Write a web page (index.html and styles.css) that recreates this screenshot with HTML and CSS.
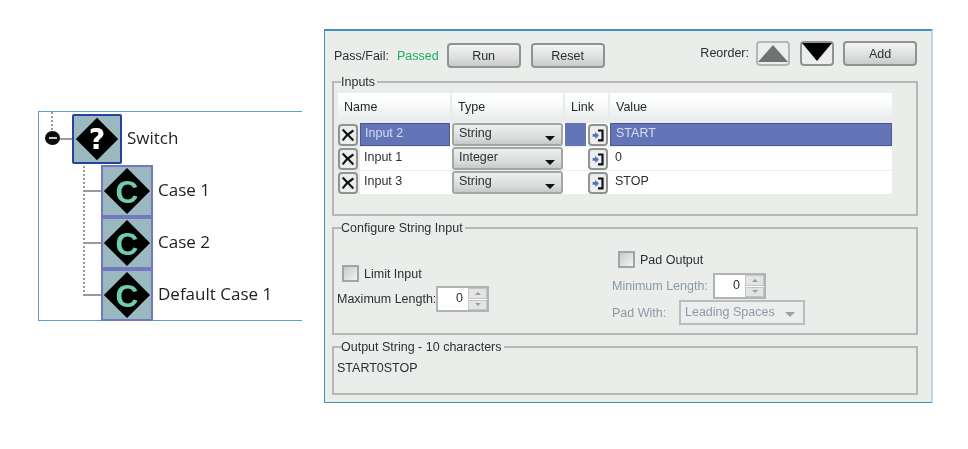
FILE: index.html
```html
<!DOCTYPE html>
<html lang="en">
<head>
<meta charset="utf-8">
<title>String Concatenation Block</title>
<link rel="stylesheet" href="styles.css">
</head>
<body>
<svg class="defs" width="0" height="0" aria-hidden="true">
  <defs>
    <symbol id="ico-x" viewBox="0 0 20 22"><path d="M4 5 L16 17 M4 17 L9 11 L16 6" fill="none" stroke="#111" stroke-width="2.4"/></symbol>
    <symbol id="ico-link" viewBox="0 0 20 22"><path d="M10 6 H15 V17 H10" fill="none" stroke="#111" stroke-width="2.4"/><path d="M4 10 H7 V7.5 L11 11.5 L7 15.5 V13 H4 Z" fill="#5570b8"/></symbol>
  </defs>
</svg>
<section class="tree">
  <span class="dots dots-top"></span>
  <span class="dots dots-main"></span>
  <div class="node node-switch">
    <span class="expander"><span class="minus"></span></span>
    <span class="stub stub-root"></span>
    <svg class="icon icon-switch" viewBox="0 0 50 50"><rect width="50" height="50" fill="#9ab8bf"/><path d="M25 2 L48 25 L25 48 L2 25 Z" fill="#000"/><text x="25" y="36" class="glyph glyph-q">?</text></svg>
    <span class="node-label">Switch</span>
  </div>
  <div class="node node-case">
    <span class="stub"></span>
    <svg class="icon icon-case" viewBox="0 0 50 50"><rect width="50" height="50" fill="#9ab8bf"/><path d="M25 1 L49 25 L25 49 L1 25 Z" fill="#000"/><text x="25" y="37" class="glyph glyph-c">C</text></svg>
    <span class="node-label">Case 1</span>
  </div>
  <div class="node node-case">
    <span class="stub"></span>
    <svg class="icon icon-case" viewBox="0 0 50 50"><rect width="50" height="50" fill="#9ab8bf"/><path d="M25 1 L49 25 L25 49 L1 25 Z" fill="#000"/><text x="25" y="37" class="glyph glyph-c">C</text></svg>
    <span class="node-label">Case 2</span>
  </div>
  <div class="node node-case">
    <span class="stub"></span>
    <svg class="icon icon-case" viewBox="0 0 50 50"><rect width="50" height="50" fill="#9ab8bf"/><path d="M25 1 L49 25 L25 49 L1 25 Z" fill="#000"/><text x="25" y="37" class="glyph glyph-c">C</text></svg>
    <span class="node-label">Default Case 1</span>
  </div>
</section>

<section class="panel">
  <div class="toolbar">
    <div class="toolbar-left">
      <span class="pf-label">Pass/Fail:</span>
      <span class="pf-value">Passed</span>
      <button class="btn btn-run">Run</button>
      <button class="btn btn-reset">Reset</button>
    </div>
    <div class="toolbar-right">
      <span class="reorder">Reorder:</span>
      <button class="btn btn-arrow btn-up" aria-label="Up"><svg width="32" height="23" viewBox="0 0 32 23"><path d="M1 20 L16 3 L31 20 Z" fill="#6d7272"/></svg></button>
      <button class="btn btn-arrow" aria-label="Down"><svg width="32" height="23" viewBox="0 0 32 23"><path d="M1 1 H31 L16 19 Z" fill="#000"/></svg></button>
      <button class="btn btn-add">Add</button>
    </div>
  </div>

  <fieldset class="group group-inputs">
    <legend>Inputs</legend>
    <div class="grid-row grid-head">
      <div class="hcell">Name</div>
      <div class="hcell">Type</div>
      <div class="hcell">Link</div>
      <div class="hcell">Value</div>
    </div>
    <div class="grid-row row row-selected">
      <div class="cell cell-name"><button class="mini"><svg width="20" height="22"><use href="#ico-x"/></svg></button><span class="name-box">Input 2</span></div>
      <div class="select">String<i class="caret"></i></div>
      <div class="cell cell-link"><span class="link-fill"></span><button class="mini"><svg width="20" height="22"><use href="#ico-link"/></svg></button></div>
      <div class="cell cell-value">START</div>
    </div>
    <div class="grid-row row">
      <div class="cell cell-name"><button class="mini"><svg width="20" height="22"><use href="#ico-x"/></svg></button><span class="name-box">Input 1</span></div>
      <div class="select">Integer<i class="caret"></i></div>
      <div class="cell cell-link"><span class="link-fill"></span><button class="mini"><svg width="20" height="22"><use href="#ico-link"/></svg></button></div>
      <div class="cell cell-value">0</div>
    </div>
    <div class="grid-row row">
      <div class="cell cell-name"><button class="mini"><svg width="20" height="22"><use href="#ico-x"/></svg></button><span class="name-box">Input 3</span></div>
      <div class="select">String<i class="caret"></i></div>
      <div class="cell cell-link"><span class="link-fill"></span><button class="mini"><svg width="20" height="22"><use href="#ico-link"/></svg></button></div>
      <div class="cell cell-value">STOP</div>
    </div>
  </fieldset>

  <fieldset class="group group-config">
    <legend>Configure String Input</legend>
    <div class="config-col config-left">
      <label class="check-line"><span class="check"></span>Limit Input</label>
      <div class="field-line">
        <span class="field-label">Maximum Length:</span>
        <div class="spin"><span class="spin-val">0</span><span class="spin-btns"><i class="up"></i><i class="down"></i></span></div>
      </div>
    </div>
    <div class="config-col config-right">
      <label class="check-line"><span class="check"></span>Pad Output</label>
      <div class="field-line disabled">
        <span class="field-label label-min">Minimum Length:</span>
        <div class="spin"><span class="spin-val">0</span><span class="spin-btns"><i class="up"></i><i class="down"></i></span></div>
      </div>
      <div class="field-line disabled line-pad">
        <span class="field-label label-pad">Pad With:</span>
        <div class="select-off">Leading Spaces<i class="caret caret-off"></i></div>
      </div>
    </div>
  </fieldset>

  <fieldset class="group group-output">
    <legend>Output String - 10 characters</legend>
    <div class="output">START0STOP</div>
  </fieldset>
</section>
</body>
</html>
```
FILE: styles.css
```css
* { box-sizing: border-box; }
html, body { margin: 0; height: 449px; overflow: hidden; background: #fff; }
body {
  display: flex;
  align-items: flex-start;
  font: 12.5px "Liberation Sans", Arial, sans-serif;
  color: #2b2f33;
  filter: blur(.35px);
}
.defs { position: absolute; }

/* tree */
.tree {
  position: relative;
  width: 264px;
  height: 210px;
  margin: 111px 0 0 38px;
  border: 1px solid #5b9fd2;
  border-right: 0;
  font: 17px "Open Sans", "Liberation Sans", sans-serif;
  color: #222;
}
.node { position: relative; display: flex; align-items: center; }
.node-switch { height: 49px; margin-top: 2px; padding-left: 33px; }
.node-case { height: 52px; padding-left: 62px; }
.node-switch + .node-case { margin-top: 2px; }
.icon { display: block; flex: none; }
.icon-switch { width: 50px; height: 50px; border: 2px solid #28429a; border-radius: 2px; }
.icon-case { width: 52px; height: 52px; border: 2px solid #7478c0; }
.node-label { margin: 0 0 3px 5px; }
.glyph { font-weight: 700; text-anchor: middle; }
.glyph-q { font-family: "DejaVu Sans", sans-serif; font-size: 31px; fill: #fff; }
.glyph-c { font-family: "Liberation Sans", sans-serif; font-size: 33px; fill: #6fcdb0; }
.dots { position: absolute; border-left: 2px dotted #9a9a9a; }
.dots-top { left: 12px; top: 0; height: 18px; }
.dots-main { left: 44px; top: 50px; height: 134px; }
.expander {
  position: absolute; left: 6px; top: 17px;
  width: 15px; height: 14px; border-radius: 50%; background: #0c0c0c;
  display: flex; align-items: center; justify-content: center;
}
.minus { width: 8px; height: 2px; background: #c9c9c9; }
.stub { position: absolute; left: 45px; top: 25px; width: 17px; height: 2px; background: #9a9a9a; }
.stub-root { left: 21px; top: 24px; width: 12px; }

/* panel */
.panel {
  width: 609px;
  height: 374px;
  margin: 29px 0 0 22px;
  padding: 0 13px 0 7px;
  background: #ebedeb;
  border: 1px solid #3f8fc4;
  border-right: 2px solid #bcd6e6;
  border-top-width: 2px;
}
.toolbar { display: flex; justify-content: space-between; height: 44px; padding: 10px 1px 0 2px; }
.toolbar-left, .toolbar-right { display: flex; align-items: flex-start; }
.pf-label { margin-top: 8px; }
.pf-value { margin: 8px 0 0 8px; color: #1fae5a; }
.btn {
  height: 25px; padding: 0;
  font: inherit; color: #2b2f33;
  border: 2px solid #8f9493; border-radius: 4px;
  background: linear-gradient(#f3f4f3, #dfe1e0 55%, #c9cccb);
}
.btn-run { width: 74px; margin: 2px 0 0 8px; }
.btn-reset { width: 74px; margin: 2px 0 0 10px; }
.reorder { margin: 5px 7px 0 0; }
.btn-arrow { width: 34px; display: flex; align-items: center; justify-content: center; background: #eceeed; margin-right: 10px; }
.btn-arrow svg { display: block; flex: none; }
.btn-up { border-color: #b4b8b7; }
.btn-add { width: 74px; margin: 0 0 0 -1px; }

/* group boxes */
.group {
  margin: 0;
  padding: 0 0 0 4px;
  border: 2px solid #b6b9b8;
  min-width: 0;
}
.group legend { margin-left: 3px; padding: 0 2px 0 0; line-height: 14px; }
.group-inputs { height: 141px; }
.group-config { height: 114px; margin-top: 5px; display: flex; }
.group-output { height: 55px; margin-top: 5px; }

/* input grid */
.grid-row { display: grid; grid-template-columns: 112px 111px 43px 282px; column-gap: 2px; width: 554px; }
.grid-head { height: 26px; margin-top: 4px; margin-bottom: 4px; }
.hcell {
  padding: 7px 0 0 6px;
  color: #23272c;
  background: linear-gradient(#ffffff, #fbfcfc 40%, #e9ecec);
}
.row { height: 23px; margin-bottom: 1px; background: #fff; }
.cell { display: flex; align-items: center; min-width: 0; }
.mini {
  flex: none; width: 20px; height: 22px; padding: 0;
  border: 2px solid #8f9493; border-radius: 4px;
  background: #eceeed;
  display: flex; align-items: center; justify-content: center;
}
.mini svg { flex: none; width: 18px; height: 20px; }
.cell-name { background: #ebedeb; }
.name-box { flex: 1; align-self: stretch; margin-left: 2px; padding: 3px 0 0 4px; background: #fff; }
.cell-link { justify-content: flex-end; gap: 2px; }
.link-fill { flex: 1; align-self: stretch; }
.cell-value { padding: 0 0 3px 5px; }
.row-selected .name-box, .row-selected .link-fill, .row-selected .cell-value {
  background: #6375b6; color: #d8def0;
}
.row-selected .name-box { border: 1px solid #47589f; padding: 2px 0 0 4px; }
.row-selected .cell-value { border: 1px solid #47589f; }
.select {
  position: relative;
  padding: 1px 0 0 5px;
  border: 2px solid #a3a7a6; border-radius: 3px;
  background: linear-gradient(#eef0ef, #d9dbda 70%, #c6c9c8);
}
.caret {
  position: absolute; right: 6px; bottom: 3px;
  border: 5px solid transparent; border-top: 5px solid #111; border-bottom: 0;
}

/* config */
.config-col { display: flex; flex-direction: column; }
.config-left { width: 274px; padding-top: 30px; }
.config-right { padding-top: 16px; }
.check-line { display: flex; align-items: center; }
.config-left .check-line { margin-left: 4px; }
.config-right .check-line { margin-left: 6px; }
.check {
  width: 17px; height: 17px; margin-right: 5px;
  border: 2px solid #a1a5a4;
  background: linear-gradient(135deg, #c7cacb, #f2f3f3);
}
.field-line { display: flex; align-items: center; white-space: nowrap; }
.config-left .field-line { margin: 4px 0 0 -1px; }
.disabled { color: #8b9aa6; }
.field-line.disabled { margin-top: 5px; }
.field-line.line-pad { margin-top: 1px; }
.field-label { width: 99px; }
.label-min { width: 101px; }
.label-pad { width: 67px; }
.spin {
  display: flex; width: 53px; height: 26px;
  border: 2px solid #b0b4b3; background: #fff; color: #2b2f33;
}
.spin-val { flex: 1; padding: 3px 5px 0 0; text-align: right; }
.spin-btns { display: flex; flex-direction: column; width: 19px; gap: 1px; }
.spin-btns i { flex: 1; display: flex; align-items: center; justify-content: center; background: #e3e5e4; border: 1px solid #c3c6c5; }
.spin-btns .up::before { content: ""; border: 3px solid transparent; border-bottom: 3px solid #9aa0a0; border-top: 0; }
.spin-btns .down::before { content: ""; border: 3px solid transparent; border-top: 3px solid #9aa0a0; border-bottom: 0; }
.select-off {
  position: relative; width: 126px; height: 25px; padding: 3px 0 0 4px;
  border: 2px solid #b9bdbc; background: #eceeed;
}
.caret-off { right: 8px; bottom: 6px; border-top-color: #9aa0a0; }

/* output */
.output { padding-top: 7px; margin-left: -1px; }
```
